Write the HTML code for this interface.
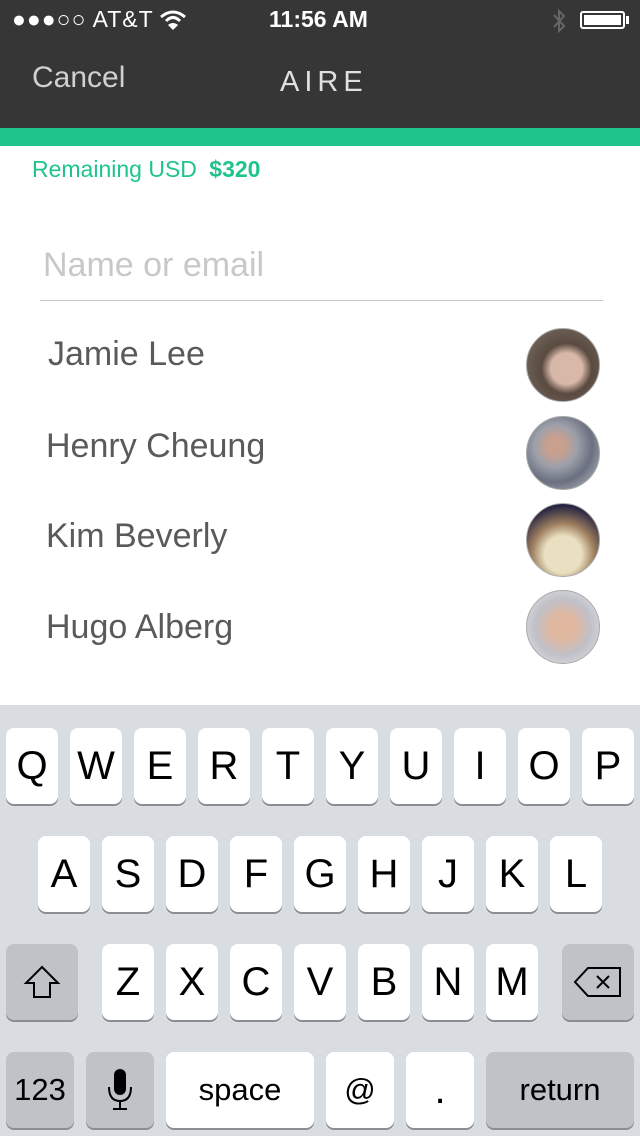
<!DOCTYPE html>
<html><head><meta charset="utf-8"><style>
*{margin:0;padding:0;box-sizing:border-box}
body{width:640px;height:1136px;position:relative;overflow:hidden;background:#fff;font-family:"Liberation Sans",Helvetica,Arial,sans-serif}
.a{position:absolute}
.hdr{left:0;top:0;width:640px;height:128px;background:#363636}
.bar{left:0;top:128px;width:640px;height:18px;background:#1fc48c}
.name{left:46px;font-size:34px;color:#5a5a5a;font-weight:300}
.av{width:74px;height:74px;border-radius:50%;left:526px;border:1px solid #aaa}
.kb{left:0;top:705px;width:640px;height:431px;background:#d9dce0}
.k{position:absolute;width:52px;height:76px;background:#fff;border-radius:8px;box-shadow:0 2px 0 #8b8d90;font-size:40px;text-align:center;line-height:76px;color:#000;font-weight:300}
.g{background:#bfc3c8}
.s{font-size:31px}
</style></head><body>
<div class="a hdr"></div>
<div class="a" style="left:12px;top:6px;color:#fff;font-size:23px;letter-spacing:1px">●●●○○ AT&amp;T</div>
<svg class="a" style="left:158px;top:8px" width="30" height="24" viewBox="0 0 30 24"><path d="M3 9 Q15 -1 27 9" stroke="#fff" stroke-width="3" fill="none"/><path d="M8 13 Q15 6 22 13" stroke="#fff" stroke-width="3" fill="none"/><path d="M15 22 L10 17 Q15 13 20 17 Z" fill="#fff"/></svg>
<div class="a" style="left:269px;top:6px;color:#fff;font-size:23px;font-weight:bold">11:56 AM</div>
<svg class="a" style="left:551px;top:8px" width="16" height="26" viewBox="0 0 16 26"><path d="M3 7 L13 18 L8 23 L8 3 L13 8 L3 19" stroke="#666" stroke-width="2" fill="none"/></svg>
<div class="a" style="left:580px;top:11px;width:45px;height:18px;border:2px solid #fff;border-radius:3px;padding:2px"><div style="background:#fff;width:100%;height:100%"></div></div>
<div class="a" style="left:626px;top:16px;width:3px;height:8px;background:#fff"></div>
<div class="a" style="left:32px;top:61px;color:#d0d0d0;font-size:30px;font-weight:300">Cancel</div>
<div class="a" style="left:280px;top:66px;color:#e0e0e0;font-size:29px;letter-spacing:5px;font-weight:300">AIRE</div>
<div class="a bar"></div>
<div class="a" style="left:32px;top:156px;color:#1fc48c;font-size:23px">Remaining USD <b style="margin-left:6px">$320</b></div>
<div class="a" style="left:43px;top:246px;color:#c8c8c8;font-size:34px;font-weight:300">Name or email</div>
<div class="a" style="left:40px;top:300px;width:563px;height:1px;background:#c8c8c8"></div>
<div class="a name" style="left:48px;top:335px">Jamie Lee</div>
<div class="a name" style="top:427px">Henry Cheung</div>
<div class="a name" style="top:517px">Kim Beverly</div>
<div class="a name" style="top:608px">Hugo Alberg</div>
<div class="a av" style="top:328px;background:radial-gradient(circle at 55% 55%,#d8b8a8 0 28%,#5a4a40 45%,#7a7268 100%)"></div>
<div class="a av" style="top:416px;background:radial-gradient(circle at 40% 40%,#c8a090 0 15%,#9ca0aa 35%,#6a7080 60%,#c8c8d0 100%)"></div>
<div class="a av" style="top:503px;background:radial-gradient(circle at 50% 70%,#e8e0c0 0 30%,#a08060 50%,#202040 80%)"></div>
<div class="a av" style="top:590px;background:radial-gradient(circle at 50% 50%,#e0b8a0 0 25%,#c0c0c8 55%,#e8e8ec 100%)"></div>
<div class="a kb">
<div class="k" style="left:6px;top:23px">Q</div><div class="k" style="left:70px;top:23px">W</div><div class="k" style="left:134px;top:23px">E</div><div class="k" style="left:198px;top:23px">R</div><div class="k" style="left:262px;top:23px">T</div><div class="k" style="left:326px;top:23px">Y</div><div class="k" style="left:390px;top:23px">U</div><div class="k" style="left:454px;top:23px">I</div><div class="k" style="left:518px;top:23px">O</div><div class="k" style="left:582px;top:23px">P</div>
<div class="k" style="left:38px;top:131px">A</div><div class="k" style="left:102px;top:131px">S</div><div class="k" style="left:166px;top:131px">D</div><div class="k" style="left:230px;top:131px">F</div><div class="k" style="left:294px;top:131px">G</div><div class="k" style="left:358px;top:131px">H</div><div class="k" style="left:422px;top:131px">J</div><div class="k" style="left:486px;top:131px">K</div><div class="k" style="left:550px;top:131px">L</div>
<div class="k g" style="left:6px;top:239px;width:72px"><svg width="40" height="36" viewBox="0 0 40 36" style="margin-top:20px"><path d="M20 3 L36 19 L28 19 L28 33 L12 33 L12 19 L4 19 Z" stroke="#000" stroke-width="2" fill="none"/></svg></div>
<div class="k" style="left:102px;top:239px">Z</div><div class="k" style="left:166px;top:239px">X</div><div class="k" style="left:230px;top:239px">C</div><div class="k" style="left:294px;top:239px">V</div><div class="k" style="left:358px;top:239px">B</div><div class="k" style="left:422px;top:239px">N</div><div class="k" style="left:486px;top:239px">M</div>
<div class="k g" style="left:562px;top:239px;width:72px"><svg width="50" height="36" viewBox="0 0 50 36" style="margin-top:20px"><path d="M15 4 L47 4 L47 32 L15 32 L2 18 Z" stroke="#000" stroke-width="2" fill="none"/><path d="M24 12 L36 24 M36 12 L24 24" stroke="#000" stroke-width="2"/></svg></div>
<div class="k g s" style="left:6px;top:347px;width:68px">123</div>
<div class="k g" style="left:86px;top:347px;width:68px"><svg width="30" height="46" viewBox="0 0 30 46" style="margin-top:15px"><rect x="9" y="2" width="12" height="26" rx="6" fill="#000"/><path d="M4 20 Q4 34 15 34 Q26 34 26 20 M15 34 L15 42 M8 42 L22 42" stroke="#000" stroke-width="2" fill="none"/></svg></div>
<div class="k s" style="left:166px;top:347px;width:148px">space</div>
<div class="k s" style="left:326px;top:347px;width:68px">@</div>
<div class="k" style="left:406px;top:347px;width:68px">.</div>
<div class="k g s" style="left:486px;top:347px;width:148px">return</div>
</div>
</body></html>
